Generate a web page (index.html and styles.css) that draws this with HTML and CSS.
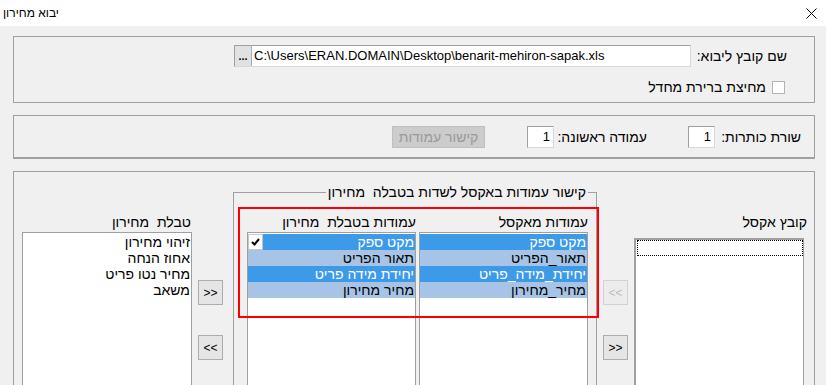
FILE: index.html
```html
<!DOCTYPE html>
<html lang="he">
<head>
   <meta charset="UTF-8">
   <meta name="viewport" content="width=device-width, initial-scale=1.0">
   <title>יבוא מחירון</title>
   <link rel="stylesheet" href="styles.css">
</head>
<body>
   <div class="titlebar">
       <span class="title">יבוא מחירון</span>
       <svg class="close" width="11" height="11" viewBox="0 0 11 11">
           <path d="M0.5 0.5 L10.5 10.5 M10.5 0.5 L0.5 10.5" stroke="#000" stroke-width="1" fill="none"/>
       </svg>
   </div>
   <div class="dialog" dir="rtl">
       <div class="group file-group">
           <div class="row">
               <label class="file-label">שם קובץ ליבוא:</label>
               <div class="filebox" dir="ltr">
                   <button class="browse">...</button>
                   <span class="path">C:\Users\ERAN.DOMAIN\Desktop\benarit-mehiron-sapak.xls</span>
               </div>
           </div>
           <div class="row check-row">
               <span class="checkbox"></span>
               <span>מחיצת ברירת מחדל</span>
           </div>
       </div>

       <div class="group header-group">
           <label class="lbl-header">שורת כותרות:</label>
           <div class="numbox">1</div>
           <label class="lbl-first">עמודה ראשונה:</label>
           <div class="numbox">1</div>
           <button class="link-btn" disabled>קישור עמודות</button>
       </div>

       <div class="group map-group">
           <div class="side excel-side">
               <div class="caption">קובץ אקסל</div>
               <div class="listbox excel-list">
                   <div class="focus-row"></div>
               </div>
           </div>
           <div class="arrows">
               <button class="arrow" dir="ltr" disabled>&lt;&lt;</button>
               <button class="arrow" dir="ltr">&gt;&gt;</button>
           </div>
           <fieldset class="mapping">
               <legend>קישור עמודות באקסל לשדות בטבלה&nbsp; מחירון</legend>
               <div class="col">
                   <div class="col-caption">עמודות מאקסל</div>
                   <ul class="listbox mapped">
                       <li class="sel">מקט ספק</li>
                       <li class="alt">תאור_הפריט</li>
                       <li class="sel">יחידת_מידה_פריט</li>
                       <li class="alt">מחיר_מחירון</li>
                   </ul>
               </div>
               <div class="col">
                   <div class="col-caption">עמודות בטבלת&nbsp; מחירון</div>
                   <ul class="listbox mapped">
                       <li class="sel">
                           <span>מקט ספק</span>
                           <span class="tick">
                               <svg width="9" height="8" viewBox="0 0 9 8">
                                   <path d="M1 4 L3.5 6.5 L8 1" stroke="#000" stroke-width="2" fill="none"/>
                               </svg>
                           </span>
                       </li>
                       <li class="alt">תאור הפריט</li>
                       <li class="sel">יחידת מידה פריט</li>
                       <li class="alt">מחיר מחירון</li>
                   </ul>
               </div>
           </fieldset>
           <div class="arrows">
               <button class="arrow" dir="ltr">&gt;&gt;</button>
               <button class="arrow" dir="ltr">&lt;&lt;</button>
           </div>
           <div class="side table-side">
               <div class="caption">טבלת&nbsp; מחירון</div>
               <ul class="listbox table-list">
                   <li>זיהוי מחירון</li>
                   <li>אחוז הנחה</li>
                   <li>מחיר נטו פריט</li>
                   <li>משאב</li>
               </ul>
           </div>
           <div class="highlight"></div>
       </div>
   </div>
</body>
</html>
```

FILE: styles.css
```css
* {
    box-sizing: border-box;
}
body {
    margin: 0;
    width: 826px;
    height: 385px;
    overflow: hidden;
    background-color: #f0f0f0;
    font-family: "Liberation Sans", "DejaVu Sans", Arial, sans-serif;
    font-size: 14px;
    color: #000;
}
button {
    font-family: inherit;
    font-size: 14px;
    padding: 0;
}
.titlebar {
    height: 26px;
    background-color: #fff;
    display: flex;
    justify-content: space-between;
    align-items: center;
    padding: 0 9px 0 3px;
    font-size: 12px;
}
.dialog {
    padding: 10px 11px 0 13px;
}
.group {
    border: 1px solid #a0a0a0;
}

/* file row */
.file-group {
    height: 67px;
    padding: 8px 27px 0 0;
}
.row {
    display: flex;
    align-items: center;
}
.file-label {
    width: 96px;
    white-space: nowrap;
}
.filebox {
    display: flex;
    width: 457px;
    height: 22px;
    background-color: #fff;
    border: 1px solid #a0a0a0;
    border-right-color: #d9d9d9;
    border-bottom-color: #d9d9d9;
}
.browse {
    width: 17px;
    border: none;
    border-right: 1px solid #adadad;
    background-color: #e1e1e1;
    font-weight: bold;
    font-size: 11px;
    line-height: 12px;
}
.path {
    padding-left: 2px;
    line-height: 20px;
    font-size: 13px;
    white-space: nowrap;
}
.check-row {
    margin-top: 13px;
    height: 14px;
}
.checkbox {
    width: 13px;
    height: 13px;
    background-color: #fff;
    border: 1px solid #b4b4b4;
    margin-right: 2px;
    margin-left: 6px;
}

/* header rows */
.header-group {
    margin-top: 12px;
    height: 44px;
    border-bottom-width: 2px;
    display: flex;
    align-items: flex-start;
    padding: 10px 13px 0 0;
    line-height: 22px;
    white-space: nowrap;
}
.lbl-header {
    width: 86px;
}
.lbl-first {
    width: 93px;
    margin-right: 41px;
}
.numbox {
    width: 27px;
    height: 22px;
    background-color: #fff;
    border: 1px solid #a0a0a0;
    border-right-color: #d9d9d9;
    border-bottom-color: #d9d9d9;
    padding-right: 3px;
    line-height: 20px;
    font-size: 13px;
}
.link-btn {
    width: 93px;
    height: 22px;
    margin-right: 42px;
    background-color: #cccccc;
    border: 1px solid #bfbfbf;
    color: #9a9a9a;
}

/* mapping area */
.map-group {
    margin-top: 12px;
    height: 240px;
    display: flex;
    align-items: flex-start;
    padding-right: 10px;
    position: relative;
}
.side {
    display: flex;
    flex-direction: column;
    width: 170px;
}
.caption {
    height: 16px;
    line-height: 16px;
    margin-top: 42px;
    white-space: nowrap;
}
.excel-side {
    margin-left: 6px;
}
.excel-side .caption {
    margin-right: -3px;
}
.table-side .caption {
    margin-right: 1px;
}
.listbox {
    list-style: none;
    margin: 0;
    padding: 1px 0 0;
    background-color: #fff;
    border: 1px solid #a0a0a0;
    height: 160px;
}
.excel-list {
    margin-top: 8px;
    padding: 0;
    border-top-width: 2px;
    border-left-width: 2px;
}
.focus-row {
    width: 166px;
    height: 16px;
    border: 1px dotted #000;
}
.table-list {
    margin-top: 2px;
}
.listbox li {
    height: 16px;
    line-height: 16px;
    padding-right: 1px;
    white-space: nowrap;
}
.listbox li.sel {
    background-color: #3d9ae8;
    color: #fff;
}
.listbox li.alt {
    background-color: #a7c4e6;
}
.listbox li:has(.tick) {
    display: flex;
}
.tick {
    margin-right: auto;
    width: 15px;
    height: 16px;
    background-color: #fff;
    border: 1px solid #c8c8c8;
    display: flex;
    align-items: center;
    justify-content: center;
}
.arrows {
    display: flex;
    flex-direction: column;
    gap: 30px;
    padding-top: 108px;
    margin-left: 6px;
}
.mapping + .arrows {
    margin-right: 10px;
}
.arrow {
    width: 25px;
    height: 25px;
    font-size: 12px;
    background-color: #e5e5e5;
    border: 1px solid #adadad;
    color: #000;
}
.arrow:disabled {
    background-color: #ececec;
    border-color: #d2d2d2;
    color: #bcbcbc;
}
.mapping {
    width: 364px;
    margin: 12px 0 0;
    padding: 14px 8px 0 13px;
    border: 1px solid #a0a0a0;
    display: flex;
    gap: 3px;
    min-inline-size: 0;
}
.mapping legend {
    padding: 0 2px;
    line-height: 16px;
    white-space: nowrap;
}
.col {
    width: 169px;
}
.col-caption {
    height: 16px;
    line-height: 16px;
    white-space: nowrap;
}
.mapped {
    margin-top: 2px;
}
.highlight {
    position: absolute;
    left: 224px;
    top: 35px;
    width: 361px;
    height: 111px;
    border: 2px solid #ff0000;
}
```
